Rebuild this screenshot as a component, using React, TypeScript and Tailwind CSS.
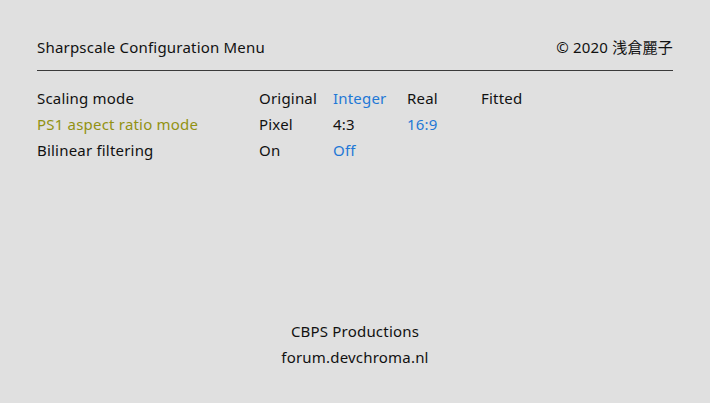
import React from 'react';

const rows = [
  { label: 'Scaling mode', active: false, options: ['Original', 'Integer', 'Real', 'Fitted'], selected: 1 },
  { label: 'PS1 aspect ratio mode', active: true, options: ['Pixel', '4:3', '16:9'], selected: 2 },
  { label: 'Bilinear filtering', active: false, options: ['On', 'Off'], selected: 1 },
];

const App = () => {
  return (
    <div
      className="w-[710px] h-[403px] bg-[#e0e0e0] text-[#111111] flex flex-col px-[37px] pt-[36px] pb-[33px] text-[15px] tracking-[0.2px]"
      style={{ fontFamily: '"Noto Sans", "Noto Sans CJK JP", sans-serif' }}
    >
      {/* Header */}
      <div className="flex justify-between items-center h-[22px]">
        <span>Sharpscale Configuration Menu</span>
        <span>© 2020 浅倉麗子</span>
      </div>
      <div className="mt-[12px] h-px bg-[#3a3a3a]" />

      {/* Settings */}
      <div className="mt-[14px] flex flex-col">
        {rows.map((row) => (
          <div key={row.label} className="flex items-center h-[26px]">
            <span className={`w-[222px] ${row.active ? 'text-[#929212]' : ''}`}>{row.label}</span>
            {row.options.map((opt, i) => (
              <span key={opt} className={`w-[74px] ${i === row.selected ? 'text-[#1f78d6]' : ''}`}>
                {opt}
              </span>
            ))}
          </div>
        ))}
      </div>

      {/* Footer */}
      <div className="mt-auto flex flex-col items-center">
        <span className="h-[26px] leading-[26px]">CBPS Productions</span>
        <span className="h-[26px] leading-[26px]">forum.devchroma.nl</span>
      </div>
    </div>
  );
};

export default App;
